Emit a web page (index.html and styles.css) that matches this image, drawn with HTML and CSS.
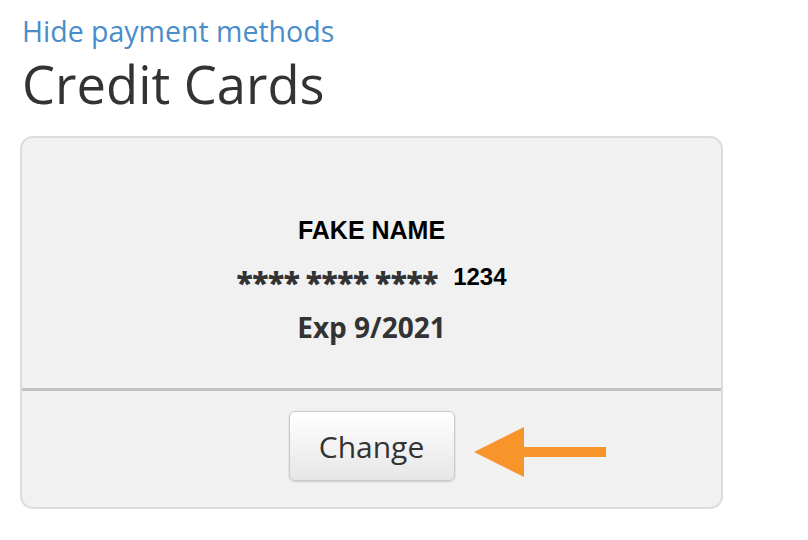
FILE: index.html
```html
<!DOCTYPE html>
<html lang="en">
<head>
    <meta charset="UTF-8">
    <meta name="viewport" content="width=device-width, initial-scale=1.0">
    <title>Credit Cards</title>
    <link rel="stylesheet" href="styles.css">
</head>
<body>

<div class="payment-methods">
    <a href="#" class="toggle-link">Hide payment methods</a>
    <h1>Credit Cards</h1>

    <div class="card-box">
        <div class="card-details">
            <div class="card-name">FAKE NAME</div>
            <div class="card-number">
                <span class="masked">**** **** ****</span>
                <span class="last-four">1234</span>
            </div>
            <div class="card-exp">Exp 9/2021</div>
        </div>
        <div class="card-actions">
            <button class="change-btn">Change</button>
            <!-- pointer arrow annotation -->
            <svg class="pointer-arrow" width="136" height="52" viewBox="0 0 136 52">
                <polygon points="0,25 50,0 50,50" fill="#f7942a"/>
                <rect x="48" y="20" width="84" height="10" fill="#f7942a"/>
            </svg>
        </div>
    </div>
</div>

</body>
</html>
```

FILE: styles.css
```css
body {
    margin: 0;
    font-family: "Open Sans", sans-serif;
    background: #fff;
    color: #333;
}
.payment-methods {
    padding: 12px 0 0 20px;
    width: 703px;
}
.toggle-link {
    display: block;
    margin-left: 2px;
    font-size: 28.5px;
    line-height: 38px;
    color: #4a8dcb;
    text-decoration: none;
}
h1 {
    margin: 0 0 18px 2px;
    font-size: 52.5px;
    font-weight: normal;
    line-height: 68px;
    color: #333;
}
.card-box {
    border: 2px solid #dcdcdc;
    border-radius: 13px;
    background-color: #f1f1f1;
    overflow: hidden;
}
.card-details {
    height: 253px;
    box-sizing: border-box;
    padding-top: 78px;
    text-align: center;
    border-bottom: 3px solid #c2c2c2;
}
.card-name {
    font-family: "Liberation Sans", Arial, sans-serif;
    font-weight: bold;
    font-size: 25px;
    line-height: 28px;
    color: #000;
}
.card-number {
    display: flex;
    justify-content: center;
    align-items: baseline;
    margin-top: 16px;
    height: 28px;
    line-height: 28px;
}
.masked {
    font-family: "Open Sans", sans-serif;
    font-weight: 800;
    font-size: 30px;
    color: #333;
    letter-spacing: -0.3px;
    word-spacing: -1.5px;
    transform: translateY(9px);
}
.last-four {
    margin-left: 15px;
    font-family: "Liberation Sans", Arial, sans-serif;
    font-weight: bold;
    font-size: 24px;
    color: #000;
}
.card-exp {
    margin-top: 22px;
    font-weight: bold;
    font-size: 28px;
    line-height: 34px;
    color: #333;
}
.card-actions {
    position: relative;
    display: flex;
    justify-content: center;
    padding: 20px 0 26px;
}
.change-btn {
    width: 166px;
    height: 70px;
    font-family: "Open Sans", sans-serif;
    font-size: 30px;
    color: #333;
    background: linear-gradient(#ffffff, #e6e6e6);
    border: 1px solid #c8c8c8;
    border-radius: 6px;
    box-shadow: 0 1px 2px rgba(0, 0, 0, 0.15);
    cursor: pointer;
}
.pointer-arrow {
    position: absolute;
    left: 452px;
    top: 36px;
}
```
